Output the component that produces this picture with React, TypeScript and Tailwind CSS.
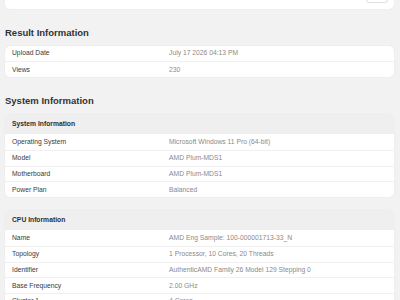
/**
 * Geekbench-style result page: result, system and CPU information tables
 */

type Row = { label: string; value: string };

const resultRows: Row[] = [
  { label: 'Upload Date', value: 'July 17 2026 04:13 PM' },
  { label: 'Views', value: '230' },
];

const systemRows: Row[] = [
  { label: 'Operating System', value: 'Microsoft Windows 11 Pro (64-bit)' },
  { label: 'Model', value: 'AMD Plum-MDS1' },
  { label: 'Motherboard', value: 'AMD Plum-MDS1' },
  { label: 'Power Plan', value: 'Balanced' },
];

const cpuRows: Row[] = [
  { label: 'Name', value: 'AMD Eng Sample: 100-000001713-33_N' },
  { label: 'Topology', value: '1 Processor, 10 Cores, 20 Threads' },
  { label: 'Identifier', value: 'AuthenticAMD Family 26 Model 129 Stepping 0' },
  { label: 'Base Frequency', value: '2.00 GHz' },
  { label: 'Cluster 1', value: '4 Cores' },
  { label: 'Cluster 2', value: '6 Cores' },
];

function InfoRow({ row, first }: { row: Row; first?: boolean }) {
  return (
    <div
      className={`flex h-[15.75px] items-center text-[6.75px] ${first ? '' : 'border-t border-[#f0f0f0]'}`}
    >
      <div className="w-[164px] shrink-0 pl-[7px] text-[#3a3a3a]">{row.label}</div>
      <div className="text-[#8a8a8a]">{row.value}</div>
    </div>
  );
}

function Card({ title, rows }: { title?: string; rows: Row[] }) {
  return (
    <div className="overflow-hidden rounded-[5px] bg-white shadow-[0_0_2px_rgba(0,0,0,0.07)]">
      {title && (
        <div className="flex h-[20px] items-center bg-[#efefef] pl-[7px] text-[6.75px] font-bold text-[#2e2e2e]">
          {title}
        </div>
      )}
      {rows.map((row, i) => (
        <InfoRow key={row.label} row={row} first={i === 0} />
      ))}
    </div>
  );
}

function SectionHeading({ children }: { children: string }) {
  return (
    <h2 className="mt-[18px] mb-[7px] text-[9.5px] leading-[12px] font-bold text-[#333]">
      {children}
    </h2>
  );
}

export default function App() {
  return (
    <div className="min-h-screen bg-[#f2f2f2] pl-[5px] pr-[6px] font-['Liberation_Sans',Arial,sans-serif]">
      {/* bottom edge of the card above, scrolled off */}
      <div className="flex h-[8.5px] justify-end rounded-b-[5px] bg-white pr-[6px] shadow-[0_0_2px_rgba(0,0,0,0.07)]">
        <div className="h-[2.5px] w-[22px] rounded-b-[3px] border border-t-0 border-[#e2e2e2] bg-white" />
      </div>

      <SectionHeading>Result Information</SectionHeading>
      <Card rows={resultRows} />

      <SectionHeading>System Information</SectionHeading>
      <Card title="System Information" rows={systemRows} />

      <div className="h-[13px]" />
      <Card title="CPU Information" rows={cpuRows} />
    </div>
  );
}
